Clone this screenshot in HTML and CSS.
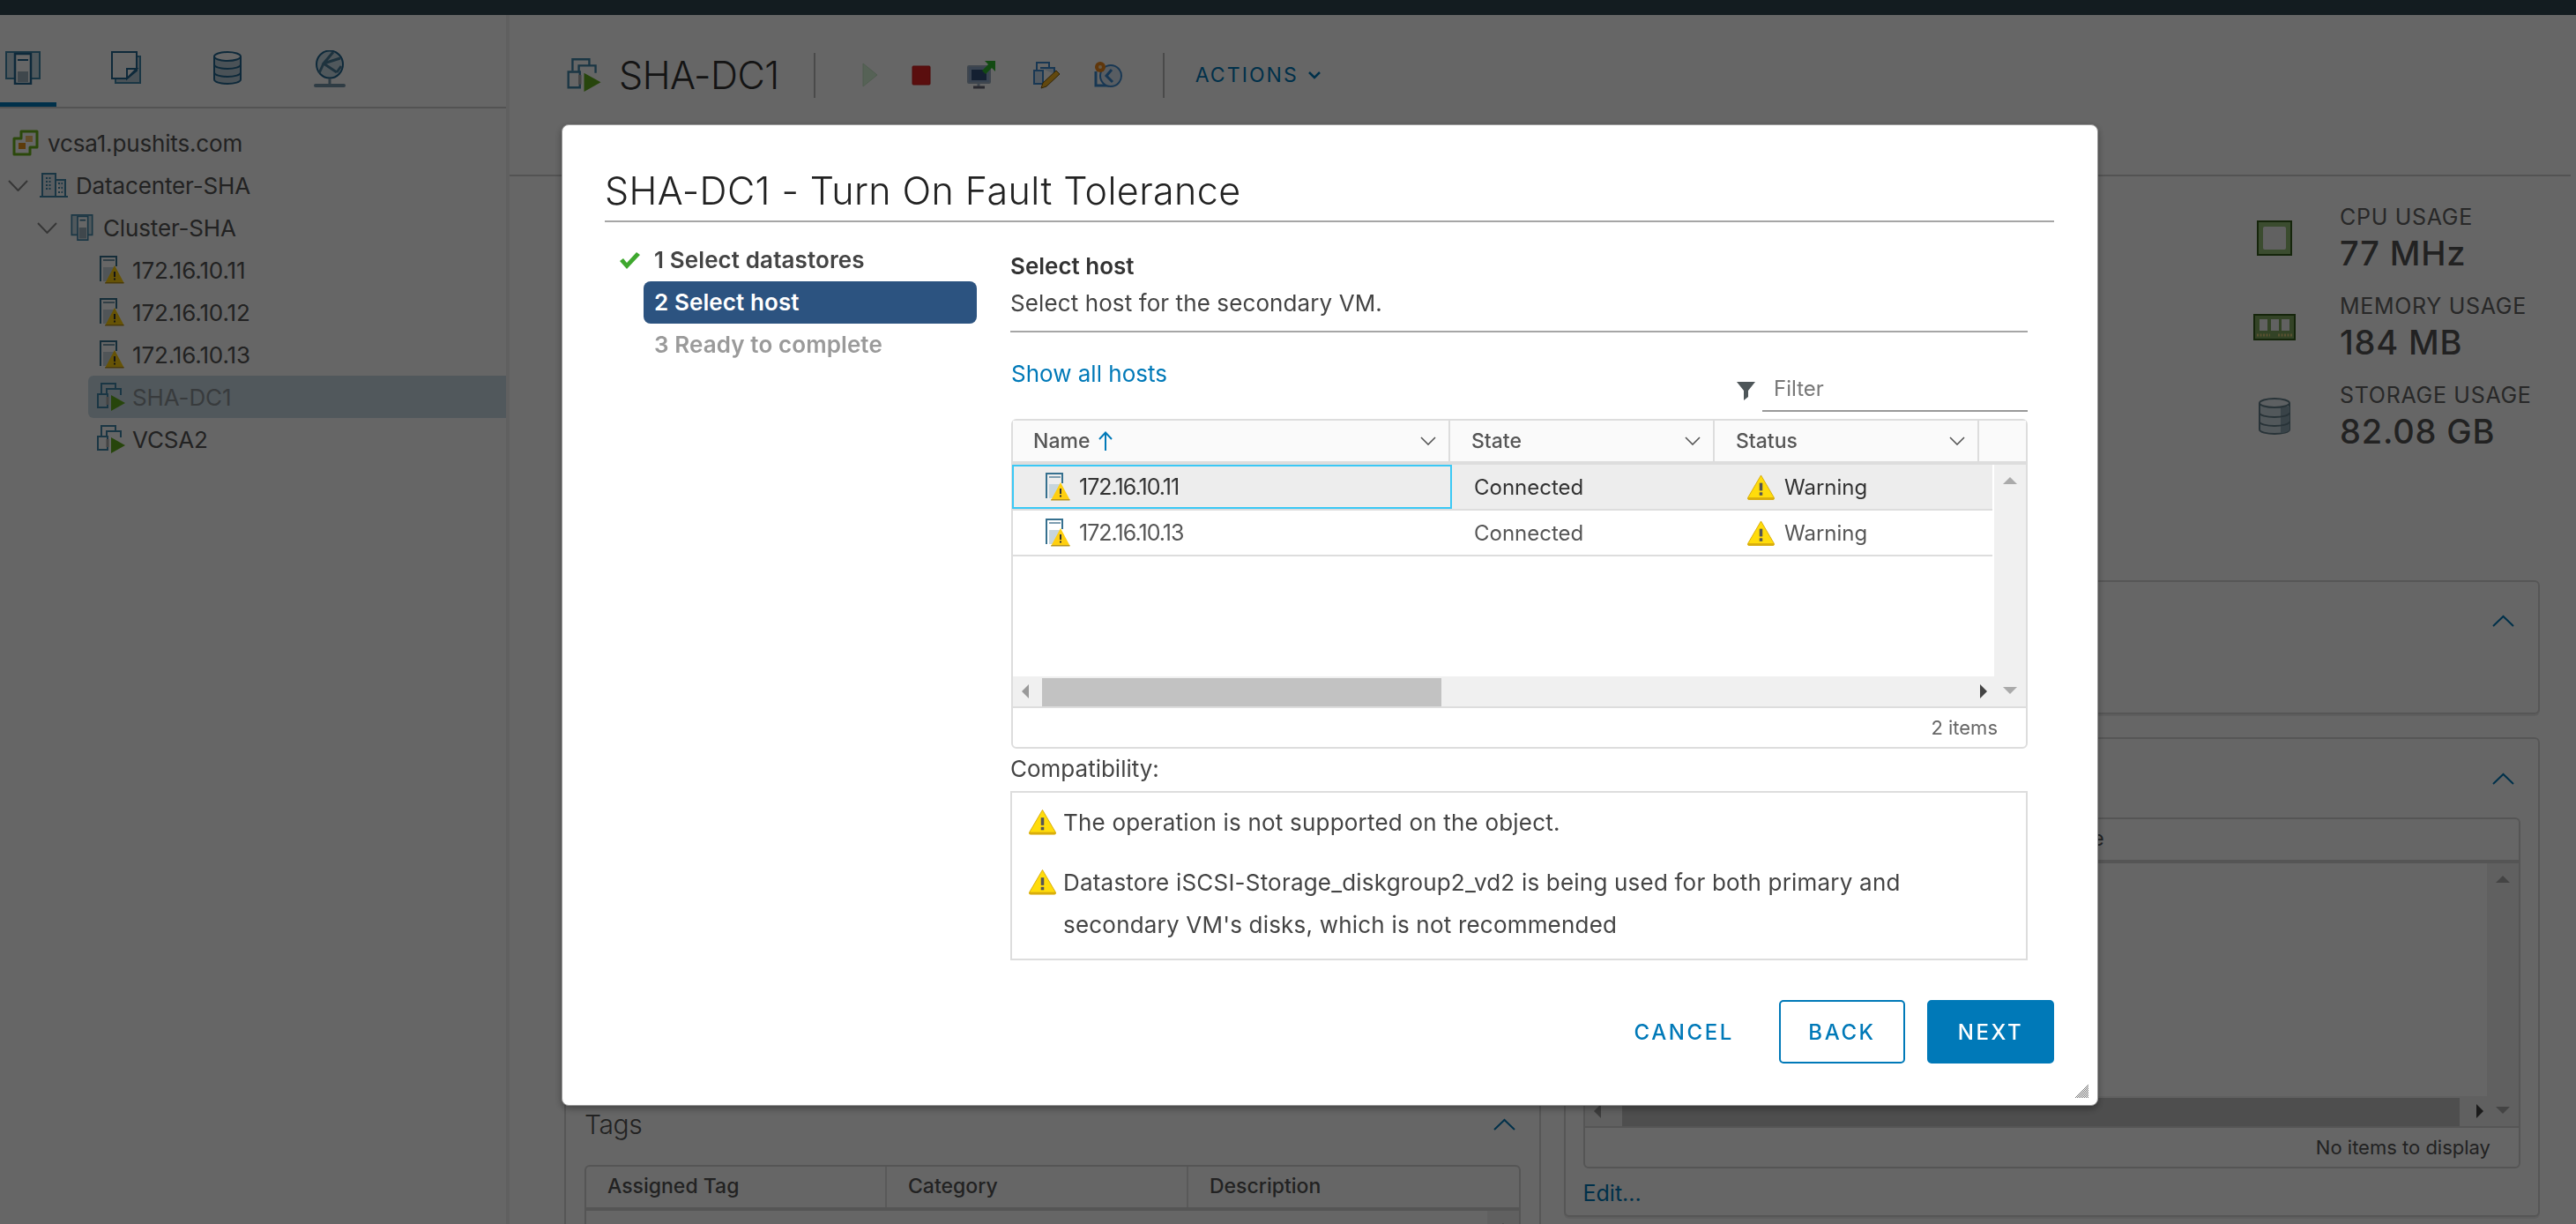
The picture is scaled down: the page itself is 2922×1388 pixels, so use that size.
FILE: index.html
```html
<!DOCTYPE html>
<html lang="en">
<head>
    <meta charset="UTF-8">
    <meta name="viewport" content="width=device-width, initial-scale=1.0">
    <title>SHA-DC1 - Turn On Fault Tolerance</title>
    <link rel="stylesheet" href="styles.css">
</head>
<body>
    <svg class="sprite" xmlns="http://www.w3.org/2000/svg">
        <symbol id="warn" viewBox="0 0 32 30">
            <path d="M16 1L31.5 27.5Q32 29.5 30 29.5H2Q0 29.5 .5 27.5Z" fill="#ffdc0b" stroke="#d9ad0c"/>
            <rect x="1" y="27" width="30" height="2.5" fill="#d9ad0c"/>
            <rect x="14.2" y="10" width="3.6" height="9" fill="#555"/>
            <rect x="14.2" y="21" width="3.6" height="3.6" fill="#555"/>
        </symbol>
        <symbol id="host-warn" viewBox="0 0 28 32">
            <path d="M1 29V1H19V12" fill="none" stroke="#36708f" stroke-width="2"/>
            <path d="M4 5H17" stroke="#7d9db0" stroke-width="2"/>
            <path d="M4 13H17V17L9 29H4Z" fill="#c7d5dc"/>
            <path d="M17 11L27.7 31H6.3Z" fill="#ffcf0f"/>
            <path d="M6.5 30H27.5V31.5H6Z" fill="#b8941a"/>
            <rect x="16" y="18" width="2" height="6" fill="#333"/>
            <rect x="16" y="25.5" width="2" height="2" fill="#333"/>
        </symbol>
        <symbol id="vm-on" viewBox="0 0 32 32">
            <path d="M5 12V1H21V7" fill="none" stroke="#4387ab" stroke-width="2"/>
            <path d="M11 13V7H27V14" fill="none" stroke="#4387ab" stroke-width="2"/>
            <path d="M1 13H12V28H1Z" fill="none" stroke="#4387ab" stroke-width="2"/>
            <path d="M12 16v9" stroke="#aaa" stroke-width="3"/>
            <path d="M16 14L32 23L16 32Z" fill="#62ad1e"/>
        </symbol>
        <symbol id="cluster" viewBox="0 0 30 36">
            <path d="M1 1H29V28H1Z" fill="#c8dbe6" stroke="#4387ab" stroke-width="2"/>
            <path d="M9 3H23V35H9Z" fill="#fff" stroke="#4387ab" stroke-width="2"/>
            <path d="M12 8H20" stroke="#3b7a9c" stroke-width="2"/>
            <rect x="11" y="18" width="10" height="15" fill="#9db2bf"/>
        </symbol>
    </svg>

    <header class="topbar"></header>

    <div class="layout">
        <aside class="sidebar">
            <nav class="side-tabs">
                <a class="side-tab active">
                    <svg width="40" height="38" viewBox="0 0 40 38"><path d="M1 1H39V31H1Z" fill="#c8dbe6" stroke="#4387ab" stroke-width="2"/><path d="M11 3H29V37H11Z" fill="#fff" stroke="#236892" stroke-width="2.5"/><path d="M14 10H26" stroke="#236892" stroke-width="2"/><rect x="14" y="23" width="12" height="12" fill="#9db2bf"/></svg>
                </a>
                <a class="side-tab">
                    <svg width="34" height="37" viewBox="0 0 34 37"><path d="M5 6H33V36H5Z" fill="#b9cdd9" stroke="#4387ab" stroke-width="2"/><path d="M1 1H29V22L18 31H1Z" fill="#fff" stroke="#236892" stroke-width="2"/><path d="M18 31V20H29Z" fill="#fff" stroke="#236892" stroke-width="2"/></svg>
                </a>
                <a class="side-tab">
                    <svg width="32" height="38" viewBox="0 0 32 38"><path d="M1 6V32C1 35 8 37 16 37S31 35 31 32V6" fill="#b9cdd9" stroke="#236892" stroke-width="2"/><ellipse cx="16" cy="6" rx="15" ry="5" fill="#fff" stroke="#236892" stroke-width="2"/><path d="M1 15C1 18 8 20 16 20S31 18 31 15M1 24C1 27 8 29 16 29S31 27 31 24" fill="none" stroke="#236892" stroke-width="2"/></svg>
                </a>
                <a class="side-tab">
                    <svg width="36" height="42" viewBox="0 0 36 42"><ellipse cx="18" cy="16" rx="15" ry="15.5" fill="#c8dbe6" stroke="#236892" stroke-width="2"/><path d="M22 2L11 15L26 25M11 15L30 9M26 25L31 18M11 15L6 26" fill="none" stroke="#4d7f9c" stroke-width="3"/><rect x="16.5" y="32" width="3" height="6" fill="#7797aa"/><rect x="0" y="38" width="36" height="4" rx="2" fill="#7797aa"/></svg>
                </a>
            </nav>
            <ul class="tree">
                <li class="tree-row depth-0">
                    <svg width="30" height="30" viewBox="0 0 30 30"><path d="M10 2H28V20H20V28H2V10H10Z" fill="#fff" stroke="#6db51d" stroke-width="3" stroke-linejoin="round"/><rect x="7" y="15" width="8" height="7" fill="#e8931a"/><rect x="15" y="7" width="8" height="7" fill="#f6c16a"/></svg>
                    <span>vcsa1.pushits.com</span>
                </li>
                <li class="tree-row depth-1">
                    <svg class="twist" width="23" height="13" viewBox="0 0 23 13"><path d="M1 1L11.5 12L22 1" fill="none" stroke="#888" stroke-width="2"/></svg>
                    <svg width="32" height="28" viewBox="0 0 32 28"><path d="M3 27V1H18V27M18 8H29V27M0 27H32" fill="#dfe9ef" stroke="#4387ab" stroke-width="2"/><path d="M7 6H14M7 10H14M7 14H14M7 18H14M21 12H26M21 17H26M21 22H26" stroke="#4387ab" stroke-width="2" stroke-dasharray="2 1.5"/></svg>
                    <span>Datacenter-SHA</span>
                </li>
                <li class="tree-row depth-2">
                    <svg class="twist" width="23" height="13" viewBox="0 0 23 13"><path d="M1 1L11.5 12L22 1" fill="none" stroke="#888" stroke-width="2"/></svg>
                    <svg width="30" height="30"><use href="#cluster"/></svg>
                    <span>Cluster-SHA</span>
                </li>
                <li class="tree-row depth-3">
                    <svg width="28" height="32"><use href="#host-warn"/></svg>
                    <span>172.16.10.11</span>
                </li>
                <li class="tree-row depth-3">
                    <svg width="28" height="32"><use href="#host-warn"/></svg>
                    <span>172.16.10.12</span>
                </li>
                <li class="tree-row depth-3">
                    <svg width="28" height="32"><use href="#host-warn"/></svg>
                    <span>172.16.10.13</span>
                </li>
                <li class="tree-row depth-vm selected">
                    <svg width="32" height="32"><use href="#vm-on"/></svg>
                    <span>SHA-DC1</span>
                </li>
                <li class="tree-row depth-vm">
                    <svg width="32" height="32"><use href="#vm-on"/></svg>
                    <span>VCSA2</span>
                </li>
            </ul>
        </aside>

        <main class="main">
            <div class="page-head">
                <svg width="39" height="38"><use href="#vm-on"/></svg>
                <h1 class="page-title">SHA-DC1</h1>
                <span class="head-sep"></span>
                <div class="head-actions">
                    <svg width="18" height="28" viewBox="0 0 18 28"><path d="M1 1L17 14L1 27Z" fill="#d8f5d8" stroke="#c4e6c4"/></svg>
                    <svg width="22" height="23" viewBox="0 0 22 23"><rect x="1" y="1" width="20" height="21" rx="1" fill="#e22525" stroke="#c71818"/></svg>
                    <svg width="32" height="32" viewBox="0 0 32 32"><rect x="1" y="6" width="25" height="19" rx="1" fill="#8ea9c7" stroke="#9db0c4" stroke-width="2"/><rect x="5" y="10" width="17" height="12" fill="#34507a"/><path d="M13 25v4" stroke="#9db0c4" stroke-width="3"/><path d="M7 30H20" stroke="#667" stroke-width="3"/><path d="M20 0H32V12L28 8L21 15L17 11L24 4Z" fill="#2eb82e"/></svg>
                    <svg width="31" height="31" viewBox="0 0 31 31"><path d="M4 10V1H18V6" fill="none" stroke="#3d8bd0" stroke-width="2"/><path d="M1 10H11V25H1Z" fill="#cfe2f3" stroke="#3d8bd0" stroke-width="2"/><path d="M8 7H24V14" fill="#cfe2f3" stroke="#3d8bd0" stroke-width="2"/><path d="M26 10L30 14L15 28L9 30L11 24Z" fill="#f5b323" stroke="#7a5a10"/></svg>
                    <svg width="33" height="32" viewBox="0 0 33 32"><path d="M3 12V28H18" fill="none" stroke="#3d8bd0" stroke-width="3"/><circle cx="20" cy="17" r="12" fill="#dce9f5" stroke="#3d8bd0" stroke-width="2"/><path d="M21 10L15 17L22 24" fill="none" stroke="#3d8bd0" stroke-width="3"/><circle cx="8" cy="7" r="6" fill="#f08a1d"/><circle cx="8" cy="7" r="2" fill="#ffe0b0"/></svg>
                </div>
                <span class="head-sep"></span>
                <a class="actions-link">ACTIONS
                    <svg width="14" height="9" viewBox="0 0 14 9"><path d="M1 1L7 7L13 1" fill="none" stroke="#0079b8" stroke-width="2.5"/></svg>
                </a>
            </div>
            <div class="page-tabs"></div>

            <section class="summary">
                <div class="stat">
                    <div class="stat-icon"><svg width="40" height="40" viewBox="0 0 40 40"><rect x="1" y="1" width="38" height="38" fill="#95bf76" stroke="#365c1c" stroke-width="2"/><rect x="7" y="7" width="26" height="26" rx="2" fill="#f2f2f2"/></svg></div>
                    <div><div class="stat-label">CPU USAGE</div><div class="stat-value">77 MHz</div></div>
                </div>
                <div class="stat">
                    <div class="stat-icon"><svg width="48" height="30" viewBox="0 0 48 30"><rect x="1" y="1" width="46" height="28" fill="#7fa860" stroke="#365c1c" stroke-width="2"/><rect x="7" y="6" width="9" height="13" fill="#f2f2f2"/><rect x="20" y="6" width="9" height="13" fill="#f2f2f2"/><rect x="32" y="6" width="9" height="13" fill="#f2f2f2"/><path d="M4 24H19M28 24H44" stroke="#e2cc7a" stroke-width="3" stroke-dasharray="2 1.5"/></svg></div>
                    <div><div class="stat-label">MEMORY USAGE</div><div class="stat-value">184 MB</div></div>
                </div>
                <div class="stat">
                    <div class="stat-icon"><svg width="36" height="42" viewBox="0 0 36 42"><path d="M1 6V36C1 39 9 41 18 41S35 39 35 36V6" fill="#cddde4" stroke="#64808c" stroke-width="2"/><path d="M25 10H35V36C35 38 30 40 25 40Z" fill="#8fa9b5"/><ellipse cx="18" cy="6" rx="17" ry="5" fill="#e8f0f4" stroke="#64808c" stroke-width="2"/><path d="M1 17C1 20 9 22 18 22S35 20 35 17M1 27C1 30 9 32 18 32S35 30 35 27" fill="none" stroke="#64808c" stroke-width="2"/></svg></div>
                    <div><div class="stat-label">STORAGE USAGE</div><div class="stat-value">82.08 GB</div></div>
                </div>
            </section>

            <section class="panels">
                <div class="panel-col">
                    <div class="panel panel-tags">
                        <div class="panel-head">
                            <span class="panel-title">Tags</span>
                            <svg class="chev-up" width="25" height="14" viewBox="0 0 25 14"><path d="M1 13L12.5 2L24 13" fill="none" stroke="#0079b8" stroke-width="2"/></svg>
                        </div>
                        <div class="dim-table">
                            <div class="dim-head">
                                <span class="dim-cell dim-tag">Assigned Tag</span>
                                <span class="dim-cell dim-cat">Category</span>
                                <span class="dim-cell">Description</span>
                            </div>
                            <div class="dim-body">
                                <div class="vscroll dim-vscroll"><span class="arrow-up"></span></div>
                            </div>
                        </div>
                    </div>
                </div>
                <div class="panel-col">
                    <div class="panel panel-top">
                        <div class="panel-head end">
                            <svg class="chev-up" width="25" height="14" viewBox="0 0 25 14"><path d="M1 13L12.5 2L24 13" fill="none" stroke="#0079b8" stroke-width="2"/></svg>
                        </div>
                    </div>
                    <div class="panel panel-attrs">
                        <div class="panel-head end">
                            <svg class="chev-up" width="25" height="14" viewBox="0 0 25 14"><path d="M1 13L12.5 2L24 13" fill="none" stroke="#0079b8" stroke-width="2"/></svg>
                        </div>
                        <div class="dim-table attrs-table">
                            <div class="dim-head">
                                <span class="dim-cell attr-name">Attribute</span>
                                <span class="dim-cell attr-value">Value</span>
                            </div>
                            <div class="attrs-body">
                                <div class="attrs-left">
                                    <div class="attrs-rows"></div>
                                    <div class="hscroll attrs-hscroll">
                                        <span class="arrow-left"></span>
                                        <span class="thumb attrs-thumb"></span>
                                        <span class="arrow-right"></span>
                                    </div>
                                </div>
                                <div class="vscroll attrs-vscroll"><span class="arrow-up"></span><span class="arrow-down"></span></div>
                            </div>
                            <div class="dim-foot">No items to display</div>
                        </div>
                        <a class="edit-link">Edit...</a>
                    </div>
                </div>
            </section>
        </main>
    </div>

    <div class="backdrop"></div>

    <div class="modal">
        <h2 class="modal-title">SHA-DC1 - Turn On Fault Tolerance</h2>
        <div class="modal-body">
            <ol class="steps">
                <li class="step done">
                    <svg class="check" width="24" height="19" viewBox="0 0 24 19"><path d="M1 10L5 7L9 12L20 0L24 3L9 19Z" fill="#3ea82e"/></svg>
                    <span class="step-label">1 Select datastores</span>
                </li>
                <li class="step current"><span class="step-label">2 Select host</span></li>
                <li class="step todo"><span class="step-label">3 Ready to complete</span></li>
            </ol>

            <div class="content">
                <div class="content-head">
                    <div class="content-title">Select host</div>
                    <div class="content-sub">Select host for the secondary VM.</div>
                </div>

                <div class="toolbar">
                    <a class="show-all">Show all hosts</a>
                    <div class="filter">
                        <svg width="21" height="21" viewBox="0 0 21 21"><path d="M0 0H21L13 10V17L8 21V10Z" fill="#4e5659"/></svg>
                        <div class="filter-input">Filter</div>
                    </div>
                </div>

                <div class="grid">
                    <div class="grid-head">
                        <div class="th th-name">
                            <span>Name</span>
                            <svg class="sort" width="16" height="22" viewBox="0 0 16 22"><path d="M8 22V2M1 9L8 1.5L15 9" fill="none" stroke="#0079b8" stroke-width="2"/></svg>
                            <svg class="th-menu" width="18" height="10" viewBox="0 0 18 10"><path d="M1 1L9 9L17 1" fill="none" stroke="#555" stroke-width="1.6"/></svg>
                        </div>
                        <div class="th th-col">
                            <span>State</span>
                            <svg class="th-menu" width="18" height="10" viewBox="0 0 18 10"><path d="M1 1L9 9L17 1" fill="none" stroke="#555" stroke-width="1.6"/></svg>
                        </div>
                        <div class="th th-col">
                            <span>Status</span>
                            <svg class="th-menu" width="18" height="10" viewBox="0 0 18 10"><path d="M1 1L9 9L17 1" fill="none" stroke="#555" stroke-width="1.6"/></svg>
                        </div>
                        <div class="th th-rest"></div>
                    </div>

                    <div class="grid-body">
                        <div class="grid-left">
                            <div class="grid-rows">
                                <div class="row selected">
                                    <div class="td td-name">
                                        <svg width="28" height="32"><use href="#host-warn"/></svg>
                                        <span>172.16.10.11</span>
                                    </div>
                                    <div class="td td-state">Connected</div>
                                    <div class="td td-status">
                                        <svg width="31" height="29"><use href="#warn"/></svg>
                                        <span>Warning</span>
                                    </div>
                                </div>
                                <div class="row">
                                    <div class="td td-name">
                                        <svg width="28" height="32"><use href="#host-warn"/></svg>
                                        <span>172.16.10.13</span>
                                    </div>
                                    <div class="td td-state">Connected</div>
                                    <div class="td td-status">
                                        <svg width="31" height="29"><use href="#warn"/></svg>
                                        <span>Warning</span>
                                    </div>
                                </div>
                            </div>
                            <div class="hscroll">
                                <span class="arrow-left"></span>
                                <span class="thumb"></span>
                                <span class="arrow-right"></span>
                            </div>
                        </div>
                        <div class="vscroll"><span class="arrow-up"></span><span class="arrow-down"></span></div>
                    </div>

                    <div class="grid-foot">2 items</div>
                </div>

                <div class="compat-label">Compatibility:</div>
                <div class="compat">
                    <div class="compat-msg">
                        <svg width="31" height="30"><use href="#warn"/></svg>
                        <p>The operation is not supported on the object.</p>
                    </div>
                    <div class="compat-msg">
                        <svg width="31" height="30"><use href="#warn"/></svg>
                        <p>Datastore iSCSI-Storage_diskgroup2_vd2 is being used for both primary and<br>secondary VM's disks, which is not recommended</p>
                    </div>
                </div>
            </div>
        </div>

        <div class="modal-foot">
            <button class="btn btn-link">CANCEL</button>
            <button class="btn btn-outline">BACK</button>
            <button class="btn btn-primary">NEXT</button>
        </div>

        <svg class="resize" width="16" height="16" viewBox="0 0 16 16">
            <defs><pattern id="dots" width="2" height="2" patternUnits="userSpaceOnUse"><rect width="1" height="1" fill="#777"/><rect x="1" y="1" width="1" height="1" fill="#777"/></pattern></defs>
            <path d="M16 0V16H0Z" fill="url(#dots)"/>
        </svg>
    </div>
</body>
</html>
```

FILE: styles.css
```css
* {
    box-sizing: border-box;
}

html, body {
    height: 100%;
}

body {
    margin: 0;
    overflow: hidden;
    display: flex;
    flex-direction: column;
    background-color: #fafafa;
    color: #565656;
    font-family: Inter, "Open Sans", sans-serif;
    font-size: 25px;
}

.sprite {
    display: none;
}

svg {
    display: block;
    flex: none;
}

.topbar {
    height: 17px;
    flex: none;
    background-color: #304650;
}

.layout {
    flex: 1;
    display: flex;
    min-height: 0;
    overflow: hidden;
}

/* sidebar */
.sidebar {
    width: 578px;
    flex: none;
    background-color: #fff;
    border-right: 4px solid #f1f1f1;
}

.side-tabs {
    height: 106px;
    display: flex;
    border-bottom: 2px solid #cfcfcf;
}

.side-tab {
    height: 104px;
    display: flex;
    padding-top: 41px;
    border-bottom: 5px solid transparent;
}

.side-tab:nth-child(1) {
    width: 64px;
    padding-left: 6px;
    border-bottom-color: #0079b8;
}

.side-tab:nth-child(2) {
    width: 178px;
    padding-left: 62px;
}

.side-tab:nth-child(3) {
    width: 114px;
}

.side-tab:nth-child(4) {
    padding-top: 40px;
}

.tree {
    list-style: none;
    margin: 15px 0 0;
    padding: 0;
}

.tree-row {
    height: 48px;
    display: flex;
    align-items: center;
    gap: 9px;
    color: #565656;
    font-size: 26px;
    letter-spacing: -0.15px;
}

.depth-0 {
    padding-left: 14px;
    gap: 10px;
}

.depth-1 {
    padding-left: 9px;
}

.depth-1 .twist {
    margin-right: 4px;
}

.depth-2 {
    padding-left: 42px;
}

.depth-2 .twist {
    margin-right: 4px;
}

.depth-3 {
    padding-left: 113px;
    gap: 9px;
}

.depth-vm {
    margin-left: 100px;
    padding-left: 10px;
    gap: 8px;
}

.tree-row.selected {
    background-color: #cbdde6;
    border-radius: 6px 0 0 6px;
    color: #8d9499;
}

/* main area */
.main {
    flex: 1;
    min-width: 0;
    overflow: hidden;
    background-color: #fff;
}

.page-head {
    height: 136px;
    display: flex;
    align-items: center;
    padding-left: 65px;
}

.page-title {
    margin: 0 39px 0 20px;
    font-size: 43px;
    font-weight: 300;
    color: #333;
    letter-spacing: -0.5px;
}

.head-sep {
    width: 2px;
    height: 51px;
    background-color: #b8b8b8;
}

.head-actions {
    width: 394px;
    display: flex;
    align-items: center;
    padding-left: 53px;
    gap: 38px;
}

.head-actions svg:nth-child(3) {
    margin-left: 3px;
}

.head-actions svg:nth-child(4) {
    margin-left: 5px;
}

.head-actions svg:nth-child(5) {
    margin-left: -1px;
}

.actions-link {
    margin-left: 35px;
    display: flex;
    align-items: center;
    gap: 11px;
    color: #0079b8;
    font-size: 23px;
    letter-spacing: 2.1px;
}

.page-tabs {
    height: 47px;
    margin-right: 6px;
    border-bottom: 2px solid #d0d0d0;
}

.summary {
    height: 458px;
    padding-top: 29px;
    display: flex;
    flex-direction: column;
    gap: 19px;
    align-items: flex-start;
    margin-left: 1977px;
}

.stat {
    display: flex;
    align-items: center;
    gap: 50px;
}

.stat-icon {
    width: 48px;
    margin-left: 1px;
    display: flex;
    justify-content: center;
}

.stat-label {
    line-height: 34px;
    font-size: 25px;
    color: #656565;
    letter-spacing: 0.7px;
}

.stat-value {
    line-height: 48px;
    font-size: 38px;
    font-weight: 500;
    color: #565656;
    letter-spacing: 0.8px;
}

.panels {
    display: flex;
    gap: 26px;
    margin-left: 62px;
    width: 2241px;
}

.panel-col {
    flex: 1;
    display: flex;
    flex-direction: column;
    gap: 26px;
}

.panel {
    background-color: #fff;
    border: 2px solid #d7d7d7;
    border-radius: 6px;
    box-shadow: 0 2px 0 #ececec;
}

.panel-head {
    display: flex;
    justify-content: space-between;
    align-items: center;
}

.panel-head.end {
    justify-content: flex-end;
}

.panel-tags {
    margin-top: 582px;
    height: 300px;
    padding: 11px 21px 0;
}

.panel-tags .panel-head {
    height: 44px;
    padding-right: 6px;
}

.panel-title {
    font-size: 30px;
    font-weight: 300;
    color: #565656;
    letter-spacing: -0.4px;
}

.panel-top {
    height: 152px;
    padding: 37px 27px 0;
}

.panel-attrs {
    height: 544px;
    padding: 38px 20px 0;
}

.panel-attrs .panel-head {
    padding-right: 7px;
}

.dim-table {
    border: 2px solid #d4d4d4;
    border-radius: 6px 6px 0 0;
    margin-top: 24px;
    height: 300px;
}

.attrs-table {
    margin-top: 37px;
    height: 398px;
    border-radius: 6px;
}

.dim-head {
    height: 50px;
    display: flex;
    border-bottom: 4px solid #d4d4d4;
}

.dim-cell {
    line-height: 44px;
    padding-left: 24px;
    border-right: 2px solid #dedede;
    font-size: 23px;
    font-weight: 500;
    color: #565656;
}

.dim-cell:last-child {
    border-right: none;
}

.dim-tag {
    width: 341px;
}

.dim-cat {
    width: 342px;
}

.attr-name {
    width: 502px;
}

.attr-value {
    padding-left: 27px;
    font-weight: 400;
}

.dim-body {
    height: 100%;
    display: flex;
    justify-content: flex-end;
}

.dim-vscroll {
    height: 240px;
    width: 34px;
    padding-top: 13px;
}

.attrs-body {
    height: 300px;
    display: flex;
    border-bottom: 2px solid #d4d4d4;
}

.attrs-left {
    flex: 1;
    display: flex;
    flex-direction: column;
}

.attrs-rows {
    flex: 1;
}

.attrs-hscroll {
    flex: 0 0 32px;
}

.attrs-hscroll .thumb {
    width: 950px;
    margin-left: 24px;
    height: 32px;
}

.attrs-hscroll .arrow-right {
    margin-left: 19px;
}

.attrs-vscroll {
    width: 34px;
    padding: 13px 0 12px;
}

.dim-foot {
    line-height: 44px;
    padding-right: 32px;
    text-align: right;
    font-size: 22px;
    color: #565656;
}

.edit-link {
    display: block;
    margin-top: 8px;
    color: #0079b8;
    line-height: 40px;
    font-size: 25px;
}

/* dialog */
.backdrop {
    position: fixed;
    inset: 0;
    background-color: rgba(0, 0, 0, 0.6);
}

.modal {
    position: fixed;
    left: 637px;
    top: 141px;
    width: 1743px;
    height: 1113px;
    padding: 0 49px 0 48px;
    background-color: #fff;
    border-radius: 8px;
    border: 1px solid #9a9a9a;
    box-shadow: 0 3px 8px rgba(0, 0, 0, 0.35);
}

.modal-title {
    height: 110px;
    margin: 0;
    padding-top: 44px;
    line-height: 60px;
    border-bottom: 2px solid #a6a6a6;
    font-size: 43px;
    font-weight: 300;
    color: #222;
    letter-spacing: 0.4px;
}

.modal-body {
    display: flex;
}

.steps {
    width: 460px;
    flex: none;
    list-style: none;
    margin: 0;
    padding: 19px 0 0 16px;
    font-size: 26px;
    font-weight: 600;
    letter-spacing: 0.1px;
}

.step {
    height: 48px;
    padding-left: 28px;
    display: flex;
    align-items: center;
    position: relative;
}

.check {
    position: absolute;
    left: 0;
    top: 15px;
}

.step-label {
    width: 378px;
    height: 48px;
    padding-left: 12px;
    line-height: 48px;
    border-radius: 8px;
}

.done {
    color: #444;
}

.current .step-label {
    background-color: #2c5380;
    color: #fff;
}

.todo {
    color: #9a9a9a;
}

.content {
    flex: 1;
    min-width: 0;
    margin-right: 30px;
}

.content-head {
    padding: 29px 0 10px;
    border-bottom: 2px solid #a6a6a6;
    color: #333;
}

.content-title {
    line-height: 42px;
    font-size: 26px;
    font-weight: 600;
}

.content-sub {
    line-height: 42px;
    font-size: 26px;
    font-weight: 400;
    color: #444;
    letter-spacing: 0.1px;
}

.toolbar {
    height: 98px;
    display: flex;
    justify-content: space-between;
    align-items: flex-start;
}

.show-all {
    margin: 23px 0 0 1px;
    line-height: 48px;
    color: #0079b8;
    font-size: 26px;
}

.filter {
    display: flex;
    align-items: flex-start;
    margin-top: 40px;
    gap: 8px;
}

.filter svg {
    margin-top: 16px;
}

.filter-input {
    width: 301px;
    height: 50px;
    padding-left: 13px;
    line-height: 48px;
    border-bottom: 2px solid #999;
    color: #777;
    font-size: 24px;
}

.grid {
    margin-left: 1px;
    height: 374px;
    border: 2px solid #ddd;
    border-radius: 6px;
}

.grid-head {
    height: 50px;
    display: flex;
    background-color: #fafafa;
    border-bottom: 4px solid #ddd;
}

.th {
    display: flex;
    align-items: center;
    border-right: 2px solid #ddd;
    font-size: 23px;
    font-weight: 500;
    color: #565656;
}

.th-name {
    width: 496px;
    padding: 0 14px 0 23px;
}

.th-col {
    width: 300px;
    padding: 0 14px 0 24px;
}

.th-rest {
    flex: 1;
    border-right: none;
}

.sort {
    margin-left: 10px;
}

.th-menu {
    margin-left: auto;
}

.grid-body {
    height: 276px;
    display: flex;
    border-bottom: 2px solid #ddd;
}

.grid-left {
    flex: 1;
    display: flex;
    flex-direction: column;
    min-width: 0;
}

.grid-rows {
    flex: 1;
    padding-right: 2px;
}

.row {
    height: 52px;
    display: flex;
    border-bottom: 2px solid #ddd;
    color: #565656;
}

.row.selected {
    background-color: #ededed;
    color: #333;
}

.td {
    display: flex;
    align-items: center;
    font-size: 24px;
}

.td-name {
    width: 498px;
    padding-left: 37px;
    gap: 10px;
    font-size: 25px;
    letter-spacing: -1px;
}

.row.selected .td-name {
    height: 50px;
    margin: 0 0 0 -1px;
    padding-left: 36px;
    width: 499px;
    border: 2px solid #3bc8f5;
}

.td-state {
    width: 302px;
    padding-left: 25px;
}

.td-status {
    padding-left: 33px;
    gap: 11px;
}

.hscroll {
    flex: 0 0 34px;
    display: flex;
    align-items: center;
    background-color: #f0f0f0;
}

.thumb {
    width: 453px;
    height: 32px;
    margin: 2px 0 0 15px;
    background-color: #c2c2c2;
}

.arrow-left {
    width: 0;
    height: 0;
    margin-left: 10px;
    border: 8px solid transparent;
    border-left: none;
    border-right: 8px solid #999;
}

.arrow-right {
    width: 0;
    height: 0;
    margin-left: 611px;
    border: 8px solid transparent;
    border-right: none;
    border-left: 8px solid #444;
}

.vscroll {
    width: 36px;
    display: flex;
    flex-direction: column;
    justify-content: space-between;
    align-items: center;
    padding: 14px 0 14px;
    background-color: #f0f0f0;
}

.arrow-up,
.arrow-down {
    width: 0;
    height: 0;
    border-left: 8px solid transparent;
    border-right: 8px solid transparent;
}

.arrow-up {
    border-bottom: 8px solid #aaa;
}

.arrow-down {
    border-top: 8px solid #aaa;
}

.grid-foot {
    line-height: 44px;
    padding-right: 32px;
    text-align: right;
    font-size: 22px;
    color: #666;
}

.compat-label {
    line-height: 46px;
    margin-bottom: 2px;
    font-size: 26px;
    color: #444;
}

.compat {
    height: 192px;
    padding: 10px 0 0 19px;
    border: 2px solid #ddd;
    color: #444;
}

.compat-msg {
    display: flex;
    gap: 8px;
    margin-bottom: 20px;
}

.compat-msg svg {
    margin-top: 8px;
}

.compat-msg p {
    margin: 0;
    line-height: 48px;
    font-size: 26px;
    letter-spacing: 0.2px;
}

.modal-foot {
    margin-top: 45px;
    display: flex;
    justify-content: flex-end;
    gap: 25px;
}

.btn {
    height: 72px;
    min-width: 143px;
    padding: 0 24px;
    border: 2px solid #0079b8;
    border-radius: 5px;
    background-color: transparent;
    color: #0079b8;
    font-family: inherit;
    font-size: 24px;
    font-weight: 500;
    letter-spacing: 2.6px;
}

.btn-link {
    border-color: transparent;
}

.btn-primary {
    min-width: 144px;
    background-color: #0079b8;
    color: #fff;
}

.resize {
    position: absolute;
    right: 10px;
    bottom: 8px;
}
```
